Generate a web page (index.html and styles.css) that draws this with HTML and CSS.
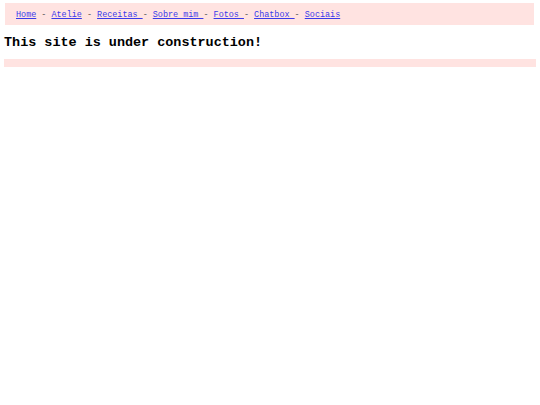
FILE: index.html
```html
<!DOCTYPE html>
<html>
<head>
<meta charset="utf-8">
<link rel="stylesheet" href="styles.css">
</head>
<body>
<div class="page">
  <nav class="nav">
    <span class="links"><a href="#">Home</a> - <a href="#">Atelie</a> - <a href="#">Receitas </a>- <a href="#">Sobre mim </a>- <a href="#">Fotos </a>- <a href="#">Chatbox </a>- <a href="#">Sociais</a></span>
  </nav>
  <h1 class="title">This site is under construction!</h1>
  <div class="bar"></div>
</div>
</body>
</html>
```

FILE: styles.css
```css
html, body {
  margin: 0;
  padding: 0;
  background: #ffffff;
}
.page {
  padding: 3px 4px;
  font-family: "Liberation Mono", "Courier New", monospace;
}
.nav {
  display: flex;
  align-items: center;
  height: 22px;
  margin: 0 2px 0 1px;
  padding: 2px 0 0 11px;
  box-sizing: border-box;
  background: #ffe3e1;
}
.links {
  font-size: 8.45px;
  color: #555555;
  white-space: pre;
}
.links a {
  color: #3a3aea;
}
.title {
  margin: 0;
  height: 34px;
  padding-top: 2px;
  box-sizing: border-box;
  line-height: 32px;
  font-size: 13.45px;
  font-weight: bold;
  color: #000000;
}
.bar {
  height: 8px;
  background: #ffe3e1;
}
```
